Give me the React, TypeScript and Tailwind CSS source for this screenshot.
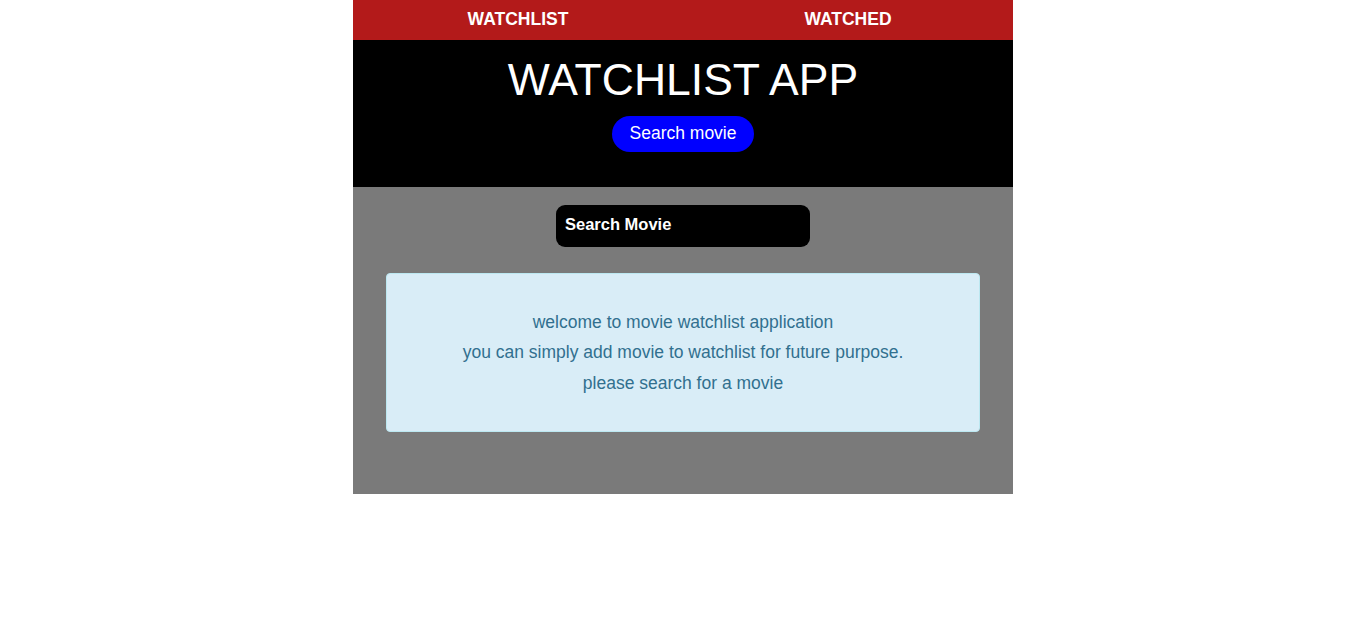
const font = { fontFamily: '"Liberation Sans", Arial, sans-serif' }

const App = () => {
  return (
    <div className="min-h-screen w-full bg-white" style={font}>
      <div className="mx-auto w-[660px]">
        <nav className="flex h-[40px] bg-[#b31a1a] pb-[2px]">
          <a className="flex flex-1 items-center justify-center text-[17.5px] font-bold text-white">WATCHLIST</a>
          <a className="flex flex-1 items-center justify-center text-[17.5px] font-bold text-white">WATCHED</a>
        </nav>

        <header className="flex h-[147px] flex-col items-center bg-black pt-[12px]">
          <h1 className="text-[44.5px] leading-[56px] text-white">WATCHLIST APP</h1>
          <button className="mt-[8px] h-[36px] w-[142px] rounded-full bg-[#0000ff] pb-[2px] text-[17.5px] text-white">
            Search movie
          </button>
        </header>

        <main className="flex h-[307px] flex-col items-center bg-[#7a7a7a] pt-[18px]">
          <div className="flex h-[42px] w-[254px] items-center rounded-[9px] bg-black px-[9px] pb-[3px]">
            <span className="text-[16.5px] font-bold text-white">Search Movie</span>
          </div>

          <div className="mt-[26px] flex h-[159px] w-[594px] flex-col items-center justify-center rounded-[4px] border border-[#bce8f1] bg-[#d9edf7] text-[17.5px] leading-[30.5px] text-[#31708f]">
            <p>welcome to movie watchlist application</p>
            <p>you can simply add movie to watchlist for future purpose.</p>
            <p>please search for a movie</p>
          </div>
        </main>
      </div>
    </div>
  )
}

export default App
